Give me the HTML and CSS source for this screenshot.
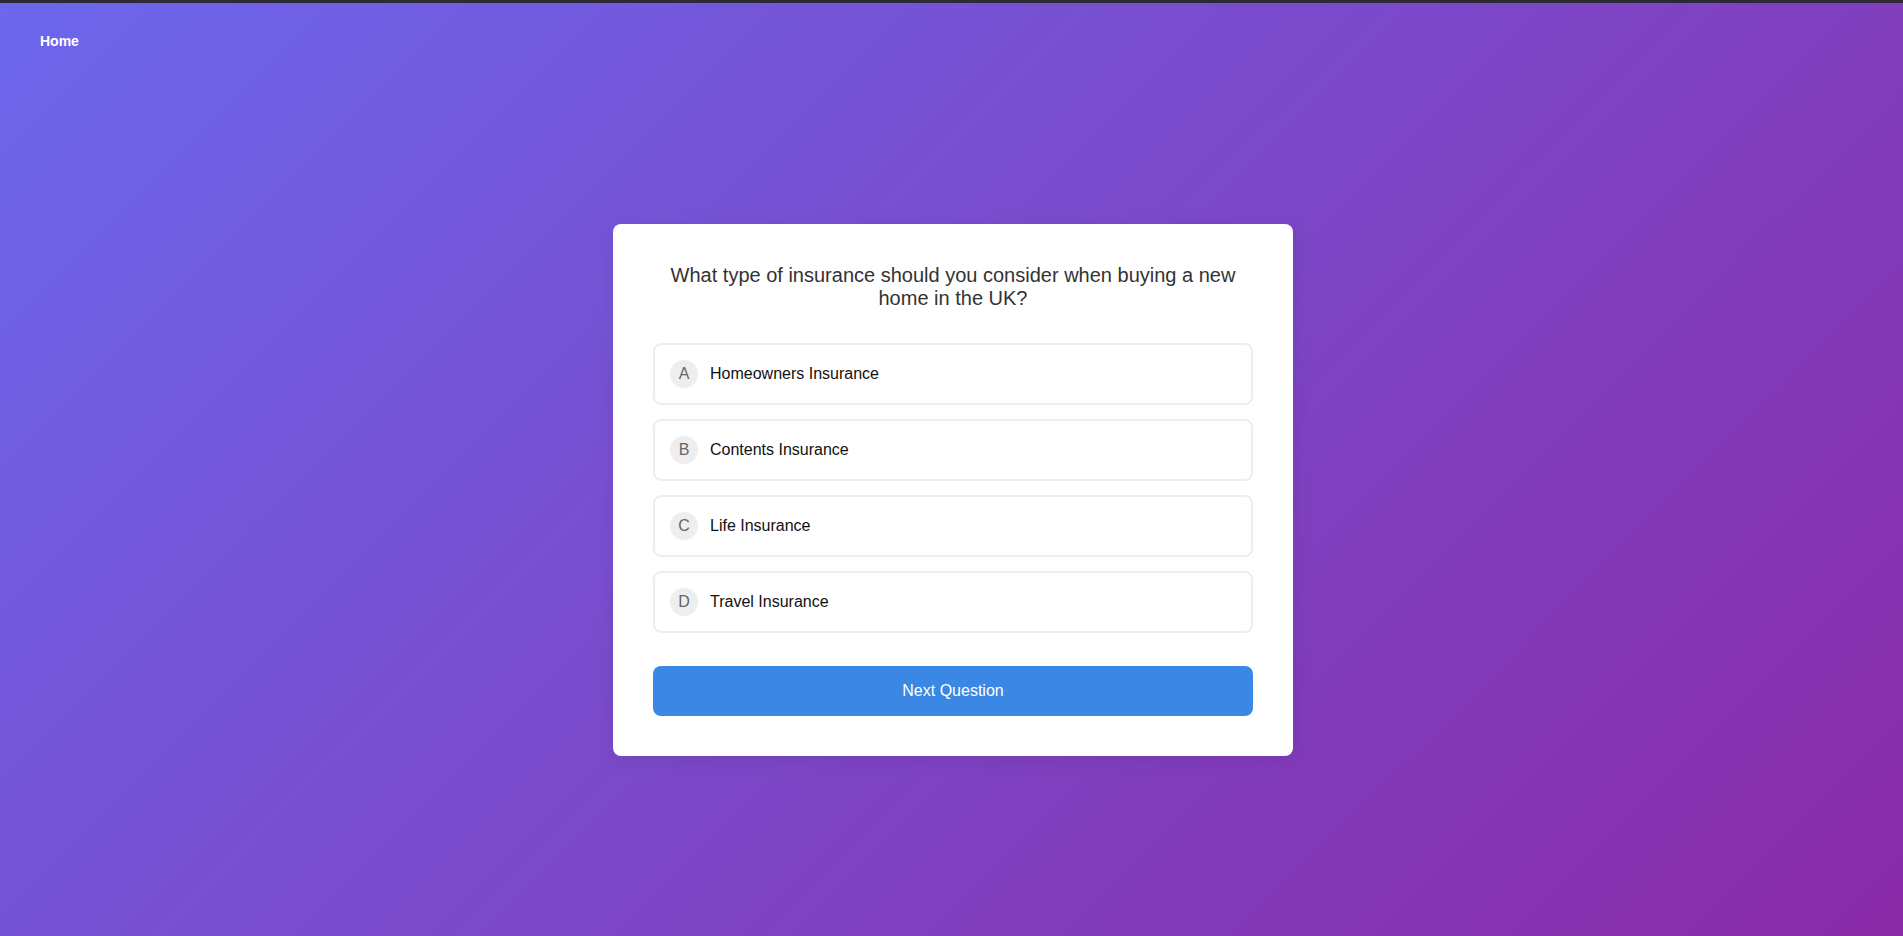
FILE: index.html
```html
<!DOCTYPE html>
<html lang="en">
<head>
<meta charset="utf-8">
<title>Quiz</title>
<link rel="stylesheet" href="styles.css">
</head>
<body>
<div class="topbar"></div>
<nav class="nav"><a class="nav-link" href="#">Home</a></nav>
<main class="main">
  <section class="card">
    <h2 class="question">What type of insurance should you consider when buying a new home in the UK?</h2>
    <ul class="options">
      <li class="option"><span class="badge">A</span><span class="label">Homeowners Insurance</span></li>
      <li class="option"><span class="badge">B</span><span class="label">Contents Insurance</span></li>
      <li class="option"><span class="badge">C</span><span class="label">Life Insurance</span></li>
      <li class="option"><span class="badge">D</span><span class="label">Travel Insurance</span></li>
    </ul>
    <button class="next" type="button">Next Question</button>
  </section>
</main>
</body>
</html>
```
FILE: styles.css
```css
html, body {
  margin: 0;
  padding: 0;
  height: 100%;
}
body {
  font-family: "Liberation Sans", Arial, sans-serif;
  background: linear-gradient(135deg, #6c67ec 0%, #8a2aa7 100%);
  background-attachment: fixed;
  min-height: 100vh;
  overflow: hidden;
}
.topbar {
  height: 3px;
  background: #2c2a35;
}
.nav {
  padding: 30px 40px;
  line-height: 16px;
}
.nav-link {
  color: #ffffff;
  font-size: 14px;
  font-weight: bold;
  text-decoration: none;
}
.main {
  display: flex;
  justify-content: center;
  padding-top: 145px;
  padding-left: 3px;
}
.card {
  width: 600px;
  padding: 40px;
  background: #ffffff;
  border-radius: 8px;
  box-shadow: 0 4px 20px rgba(0,0,0,0.08);
}
.question {
  margin: 0 0 33px;
  font-size: 20px;
  font-weight: normal;
  line-height: 23px;
  color: #333333;
  text-align: center;
}
.options {
  list-style: none;
  margin: 0 0 33px;
  padding: 0;
  display: flex;
  flex-direction: column;
  gap: 14px;
}
.option {
  display: flex;
  align-items: center;
  gap: 12px;
  padding: 15px;
  border: 2px solid #eeeeee;
  border-radius: 8px;
  background: #ffffff;
  cursor: pointer;
}
.badge {
  width: 28px;
  height: 28px;
  border-radius: 50%;
  background: #eeeeee;
  color: #666666;
  font-size: 16px;
  display: flex;
  align-items: center;
  justify-content: center;
  flex: none;
}
.label {
  font-size: 16px;
  color: #111111;
}
.next {
  display: block;
  width: 100%;
  height: 50px;
  border: none;
  border-radius: 8px;
  background: #3a88e3;
  color: #ffffff;
  font-family: "Liberation Sans", Arial, sans-serif;
  font-size: 16px;
  cursor: pointer;
}
```
